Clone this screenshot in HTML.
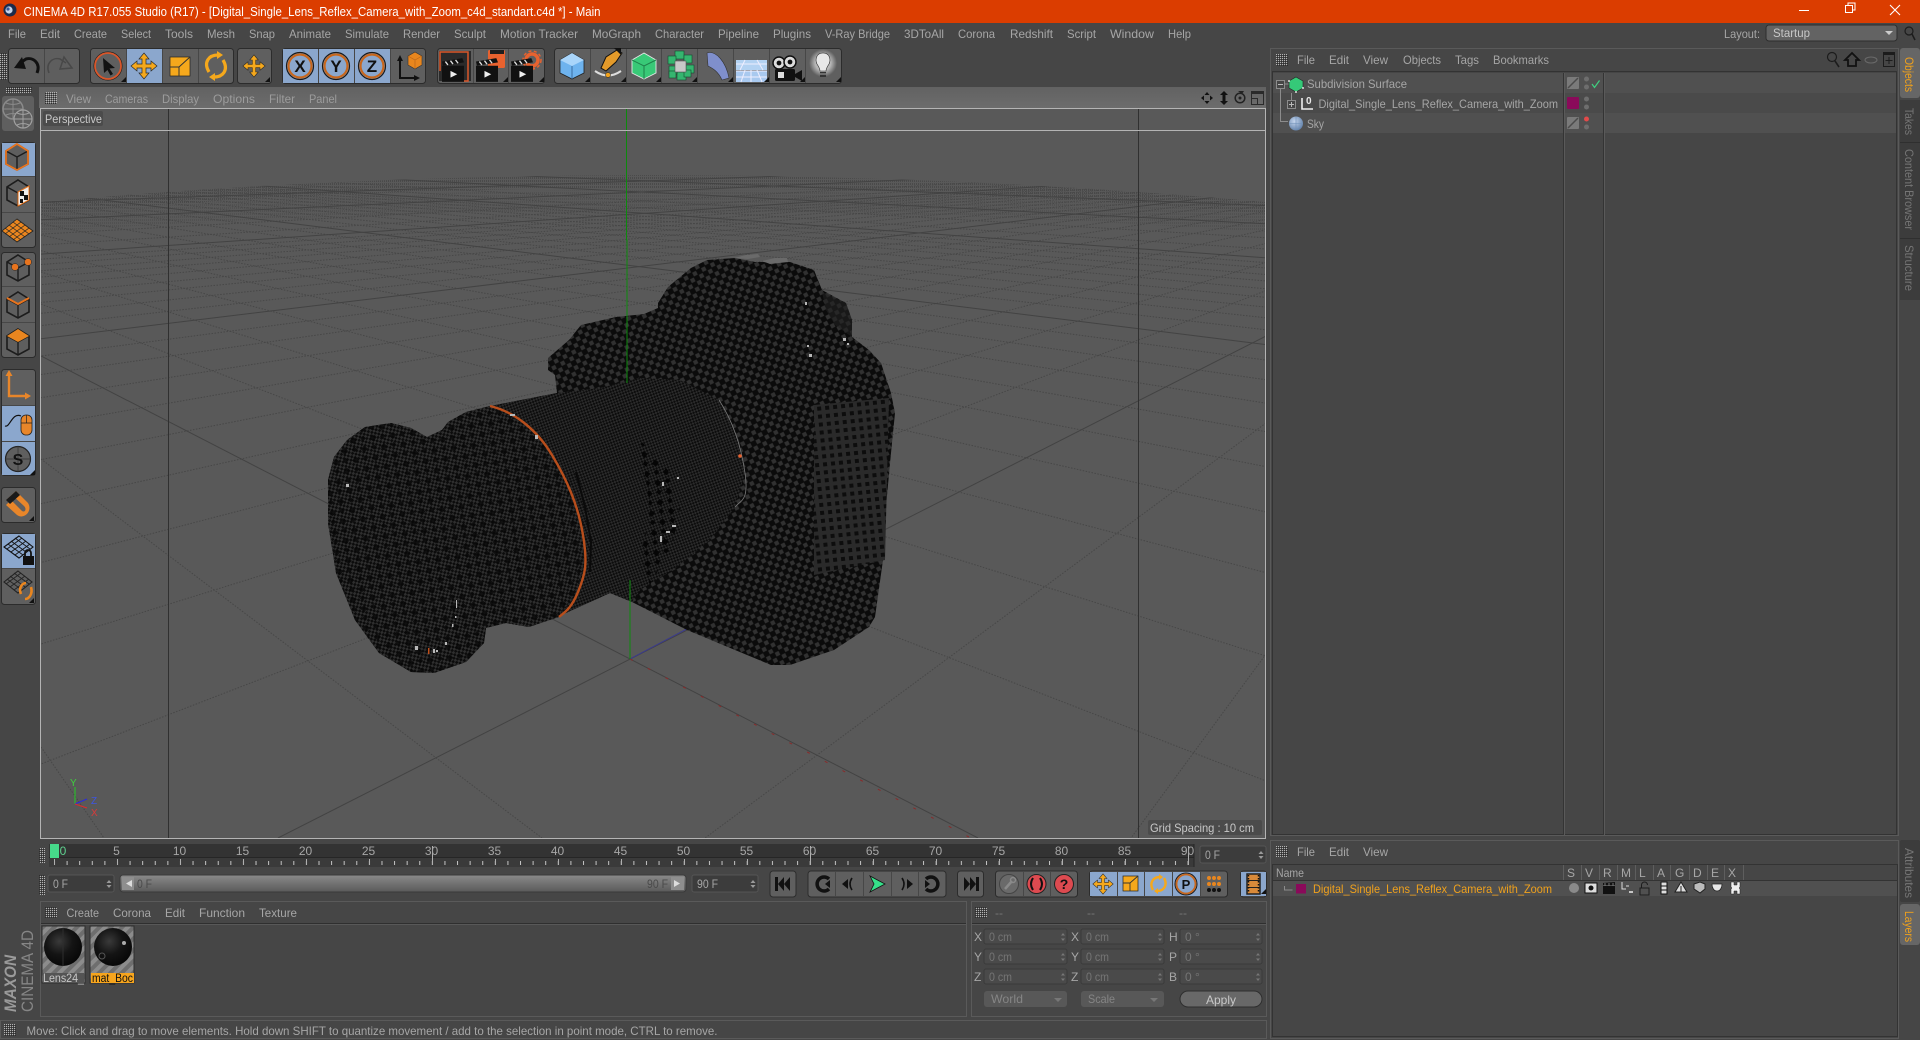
<!DOCTYPE html>
<html lang="en"><head><meta charset="utf-8"><title>CINEMA 4D</title>
<style>
html,body{margin:0;padding:0;background:#464646;overflow:hidden;width:1920px;height:1040px}
svg{display:block}
text{font-family:"Liberation Sans",sans-serif;font-size:12px;fill:#a6a6a6}
.b{font-weight:bold;fill:#111;text-anchor:middle}
.dim{fill:#757575}
.lt{fill:#c8c8c8}
.or{fill:#f0a11c}
</style></head><body>
<svg width="1920" height="1040" viewBox="0 0 1920 1040" xmlns="http://www.w3.org/2000/svg" style="overflow:hidden">
<defs>
<pattern id="g" width="2" height="2" patternUnits="userSpaceOnUse"><rect width="1" height="1" fill="#b4b4b4"/><rect x="1" y="1" width="1" height="1" fill="#2e2e2e"/></pattern>
<pattern id="pb" width="7" height="7" patternUnits="userSpaceOnUse" patternTransform="rotate(18)"><rect width="7" height="7" fill="#0b0b0b"/><path d="M3.5 .5L6.5 3.500 3.500 6.500 .5 3.500Z" fill="#313131"/></pattern>
<pattern id="pl" width="5" height="5" patternUnits="userSpaceOnUse" patternTransform="rotate(-32)"><rect width="5" height="5" fill="#0c0c0c"/><rect width="2.500" height="2.500" fill="#2e2e2e"/><rect x="2.500" y="2.500" width="2.500" height="2.500" fill="#2e2e2e"/></pattern>
<pattern id="pm" width="4" height="4" patternUnits="userSpaceOnUse" patternTransform="rotate(25)"><rect width="4" height="4" fill="#0c0c0c"/><rect width="2" height="2" fill="#2b2b2b"/><rect x="2" y="2" width="2" height="2" fill="#2b2b2b"/></pattern>
<pattern id="pk" width="14" height="14" patternUnits="userSpaceOnUse" patternTransform="rotate(38)"><rect x="1" y="1" width="5" height="5" fill="#060606"/><rect x="8" y="8" width="4" height="4" fill="#060606"/></pattern>
<pattern id="pg" width="8" height="8" patternUnits="userSpaceOnUse" patternTransform="rotate(-6)"><rect width="8" height="8" fill="#2a2a2a"/><rect x="2" y="2" width="4" height="4" fill="#0d0d0d"/></pattern>
<pattern id="hz" width="2" height="3" patternUnits="userSpaceOnUse"><rect width="1" height="2" fill="#4a4a4a"/></pattern>
<pattern id="tk" width="12.595" height="5" patternUnits="userSpaceOnUse" x="54" y="861"><rect width="1" height="4" fill="#c4c4c4"/></pattern>
<pattern id="st" width="8" height="8" patternUnits="userSpaceOnUse" patternTransform="rotate(45)"><rect width="8" height="8" fill="#6e6e6e"/><rect width="4" height="8" fill="#8c8c8c"/></pattern>
<clipPath id="vp"><rect x="41" y="109" width="1224" height="729"/></clipPath>
<clipPath id="fl"><path d="M41 202Q650 148 1266 202V838H41Z"/></clipPath>
<linearGradient id="hd" x1="0" y1="0" x2="0" y2="1"><stop offset="0" stop-color="#626262"/><stop offset="1" stop-color="#6c6c6c"/></linearGradient>
<linearGradient id="sl" x1="0" y1="0" x2="0" y2="1"><stop offset="0" stop-color="#8a8a8a"/><stop offset="1" stop-color="#5a5a5a"/></linearGradient>
<radialGradient id="sp" cx=".4" cy=".35" r=".7"><stop offset="0" stop-color="#3a3a3a"/><stop offset=".5" stop-color="#141414"/><stop offset="1" stop-color="#060606"/></radialGradient>
<radialGradient id="sk" cx=".4" cy=".35" r=".7"><stop offset="0" stop-color="#c5d6ee"/><stop offset="1" stop-color="#5f7fa8"/></radialGradient>
<radialGradient id="gl"><stop offset=".55" stop-color="#fff" stop-opacity=".55"/><stop offset="1" stop-color="#fff" stop-opacity="0"/></radialGradient>
<symbol id="mv" viewBox="-14 -14 28 28" overflow="visible"><path d="M0-13L5-7H2V-2H7V-5L13 0 7 5V2H2V7H5L0 13-5 7H-2V2H-7V5L-13 0-7-5V-2H-2V-7H-5Z" fill="#f5a81c" stroke="#2a2a2a" stroke-width=".7"/></symbol>
<symbol id="cb" viewBox="-14 -14 28 28" overflow="visible"><path d="M0-13L11-6V7L0 13-11 7V-6Z" fill="#5e5e5e" stroke="#1c1c1c" stroke-width="1.600"/><path d="M-11-6L0 0 11-6M0 0V13" fill="none" stroke="#1c1c1c" stroke-width="1.400"/></symbol>
<symbol id="tri" viewBox="0 0 5 5"><path d="M5 0V5H0Z" fill="#111"/></symbol>
<symbol id="clp" viewBox="0 0 26 28" overflow="visible"><rect x="0" y="9" width="26" height="19" fill="#111"/><path d="M0 4L24 0 26 5 1 9Z" fill="#111"/><path d="M4 4l3 4M10 3l3 4M16 2l3 4" stroke="#ddd" stroke-width="1.600"/><path d="M10 15L18 19 10 23Z" fill="#eee"/></symbol>
</defs>

<!-- title bar -->
<rect width="1920" height="23" fill="#db3d00"/>
<circle cx="10" cy="10" r="6.500" fill="#1b2a4a"/><circle cx="9" cy="10" r="3.600" fill="#c8d4ea"/><circle cx="8" cy="9" r="1.600" fill="#3b5b9b"/>
<text x="23.500" y="16" textLength="577" lengthAdjust="spacingAndGlyphs" style="font-size:13px;fill:#fff">CINEMA 4D R17.055 Studio (R17) - [Digital_Single_Lens_Reflex_Camera_with_Zoom_c4d_standart.c4d *] - Main</text>
<rect x="1799" y="10" width="10" height="1" fill="#fff"/>
<path d="M1845.500 12.500h7v-7h-7zM1848 5.500v-2.500h7v7h-2.500" fill="none" stroke="#fff"/>
<path d="M1890 5l10 10M1900 5l-10 10" stroke="#fff" stroke-width="1.100"/>

<!-- menu -->
<g>
<text x="8" y="38" textLength="18" lengthAdjust="spacingAndGlyphs">File</text>
<text x="40" y="38" textLength="20" lengthAdjust="spacingAndGlyphs">Edit</text>
<text x="74" y="38" textLength="33" lengthAdjust="spacingAndGlyphs">Create</text>
<text x="121" y="38" textLength="30" lengthAdjust="spacingAndGlyphs">Select</text>
<text x="165" y="38" textLength="28" lengthAdjust="spacingAndGlyphs">Tools</text>
<text x="207" y="38" textLength="28" lengthAdjust="spacingAndGlyphs">Mesh</text>
<text x="249" y="38" textLength="26" lengthAdjust="spacingAndGlyphs">Snap</text>
<text x="289" y="38" textLength="42" lengthAdjust="spacingAndGlyphs">Animate</text>
<text x="345" y="38" textLength="44" lengthAdjust="spacingAndGlyphs">Simulate</text>
<text x="403" y="38" textLength="37" lengthAdjust="spacingAndGlyphs">Render</text>
<text x="454" y="38" textLength="32" lengthAdjust="spacingAndGlyphs">Sculpt</text>
<text x="500" y="38" textLength="78" lengthAdjust="spacingAndGlyphs">Motion Tracker</text>
<text x="592" y="38" textLength="49" lengthAdjust="spacingAndGlyphs">MoGraph</text>
<text x="655" y="38" textLength="49" lengthAdjust="spacingAndGlyphs">Character</text>
<text x="718" y="38" textLength="41" lengthAdjust="spacingAndGlyphs">Pipeline</text>
<text x="773" y="38" textLength="38" lengthAdjust="spacingAndGlyphs">Plugins</text>
<text x="825" y="38" textLength="65" lengthAdjust="spacingAndGlyphs">V-Ray Bridge</text>
<text x="904" y="38" textLength="40" lengthAdjust="spacingAndGlyphs">3DToAll</text>
<text x="958" y="38" textLength="37" lengthAdjust="spacingAndGlyphs">Corona</text>
<text x="1010" y="38" textLength="43" lengthAdjust="spacingAndGlyphs">Redshift</text>
<text x="1067" y="38" textLength="29" lengthAdjust="spacingAndGlyphs">Script</text>
<text x="1110" y="38" textLength="44" lengthAdjust="spacingAndGlyphs">Window</text>
<text x="1168" y="38" textLength="23" lengthAdjust="spacingAndGlyphs">Help</text>
<text x="1724" y="38" textLength="36" lengthAdjust="spacingAndGlyphs">Layout:</text>
<rect x="1766" y="25" width="131" height="16" rx="3" fill="#636363" stroke="#2e2e2e"/>
<text x="1773" y="37" textLength="37" lengthAdjust="spacingAndGlyphs" class="lt">Startup</text>
<path d="M1885 31h8l-4 4Z" fill="#ccc"/>
<circle cx="1909" cy="31" r="4" fill="none" stroke="#1c1c1c" stroke-width="1.200"/><path d="M1912 34l3 6" stroke="#1c1c1c" stroke-width="1.500"/>
</g>

<!-- toolbar -->
<rect x="0" y="53" width="7" height="27" fill="url(#g)"/>
<g stroke="#2c2c2c">
<rect x="8.500" y="48.500" width="71" height="35" rx="3" fill="#5e5e5e"/>
<rect x="90.500" y="48.500" width="143" height="35" rx="3" fill="#5f5f5f"/>
<rect x="237.500" y="48.500" width="34" height="35" rx="3" fill="#5f5f5f"/>
<rect x="282.500" y="48.500" width="143" height="35" rx="3" fill="#5f5f5f"/>
<rect x="437.500" y="48.500" width="107" height="35" rx="3" fill="#5f5f5f"/>
<rect x="554.500" y="48.500" width="287" height="35" rx="3" fill="#5f5f5f"/>
</g>
<rect x="126" y="49" width="36" height="34" fill="#8ba7cd"/>
<rect x="283" y="49" width="107" height="34" fill="#8ba7cd"/>
<path d="M44.500 49v34M126.500 49v34M162.500 49v34M198.500 49v34M318.500 49v34M354.500 49v34M390.500 49v34M473.500 49v34M508.500 49v34M590.500 49v34M626.500 49v34M661.500 49v34M697.500 49v34M733.500 49v34M769.500 49v34M805.500 49v34" stroke="#474747"/>
<!-- undo/redo -->
<path d="M37 73C41 63 33 57 26 59L20 63" fill="none" stroke="#111" stroke-width="3"/><path d="M14 68L22 57 26 69Z" fill="#111"/>
<path d="M49 73C45 63 53 57 60 59L66 63M72 68L64 57 60 69Z" fill="none" stroke="#484848" stroke-width="1.500"/>
<!-- select -->
<circle cx="108" cy="66" r="14" fill="#5f5f5f" stroke="#1d1d1d" stroke-width="1"/><circle cx="108" cy="66" r="13" fill="none" stroke="#d9572b" stroke-width="1.800"/>
<path d="M103 58L115 68 109.500 68.500 113 74 110.500 75.500 107.500 70 104 73Z" fill="#111"/>
<use href="#tri" x="121" y="77" width="5" height="5"/>
<use href="#mv" x="130" y="52" width="28" height="28"/>
<rect x="170" y="57" width="20" height="19" fill="#f5a81c" stroke="#222" stroke-width=".7"/><path d="M179 76V67H170M179 67L190 57" fill="none" stroke="#333" stroke-width="1"/>
<path d="M209 72C203 62 209 55 218 55M223 60C229 70 223 77 214 77" fill="none" stroke="#f5a81c" stroke-width="3.200"/><path d="M217 51l6 4-6 4ZM215 73l-6 4 6 4Z" fill="#f5a81c"/>
<use href="#mv" x="242" y="54" width="24" height="24"/>
<use href="#tri" x="265" y="77" width="5" height="5"/>
<!-- XYZ -->
<g fill="none"><circle cx="300" cy="66" r="13.500" stroke="#1b1b1b" stroke-width="1.200"/><circle cx="300" cy="66" r="11.500" stroke="#c8671d" stroke-width="2.200"/>
<circle cx="336" cy="66" r="13.500" stroke="#1b1b1b" stroke-width="1.200"/><circle cx="336" cy="66" r="11.500" stroke="#c8671d" stroke-width="2.200"/>
<circle cx="372" cy="66" r="13.500" stroke="#1b1b1b" stroke-width="1.200"/><circle cx="372" cy="66" r="11.500" stroke="#c8671d" stroke-width="2.200"/></g>
<text x="300" y="72" class="b" style="font-size:17px">X</text><text x="336" y="72" class="b" style="font-size:17px">Y</text><text x="372" y="72" class="b" style="font-size:17px">Z</text>
<path d="M400 60V78H416" fill="none" stroke="#111" stroke-width="2"/><path d="M400 55l-3 6h6ZM420 78l-6-3v6Z" fill="#111"/>
<path d="M408 56L415 52 422 56V65L415 69 408 65Z" fill="#e8861e" stroke="#333" stroke-width=".6"/><path d="M408 56l7 4 7-4M415 60v9" fill="none" stroke="#b9661a" stroke-width=".7"/>
<!-- clappers -->
<rect x="439" y="51" width="32" height="30" fill="#2b2b2b"/><path d="M440 71V52H468V81H460" fill="none" stroke="#d9572b" stroke-width="1.500"/>
<use href="#clp" x="442" y="58" width="22" height="24"/>
<rect x="488" y="50" width="17" height="18" rx="1.500" fill="#e8622f"/><rect x="490" y="50" width="14" height="4" fill="#1e1e1e"/>
<use href="#clp" x="476" y="58" width="22" height="24"/><use href="#tri" x="503" y="77" width="5" height="5"/>
<circle cx="532" cy="60" r="6" fill="none" stroke="#e8622f" stroke-width="3.500"/><circle cx="532" cy="60" r="9" fill="none" stroke="#e8622f" stroke-width="1.500" stroke-dasharray="3 2.500"/>
<use href="#clp" x="511" y="58" width="22" height="24"/><use href="#tri" x="539" y="77" width="5" height="5"/>
<!-- objects -->
<path d="M572 53L584 60V73L572 79 560 73V60Z" fill="#6eb3ee" stroke="#222" stroke-width=".8"/><path d="M560 60L572 66 584 60 572 53Z" fill="#a9d5fa"/><path d="M572 66V79" stroke="#3a6ea0"/><use href="#tri" x="585" y="77" width="5" height="5"/>
<path d="M595 71Q608 80 621 71" fill="none" stroke="#ddd" stroke-width="2"/><circle cx="608" cy="75" r="2.500" fill="#f0a11c" stroke="#222" stroke-width=".5"/>
<path d="M601 68L606 57 617 50 622 53 616 62 606 71Z" fill="#e39a2a" stroke="#111"/><path d="M614 48h7v7Z" fill="#111"/><use href="#tri" x="621" y="77" width="5" height="5"/>
<path d="M644 53L656 60V73L644 79 632 73V60Z" fill="#38c977" stroke="#e6e6e6" stroke-width=".9"/><path d="M632 60L644 66 656 60" fill="none" stroke="#1e7f4a"/><path d="M644 66V79" stroke="#1e7f4a"/><use href="#tri" x="656" y="77" width="5" height="5"/>
<g fill="#35b56f" stroke="#14492d" stroke-width=".6"><rect x="675" y="51" width="9" height="8"/><rect x="684" y="55" width="8" height="8"/><rect x="686" y="65" width="8" height="8"/><rect x="677" y="72" width="9" height="8"/><rect x="669" y="66" width="8" height="8"/><rect x="668" y="56" width="8" height="8"/><rect x="684" y="70" width="7" height="7"/><rect x="669" y="71" width="7" height="7"/></g><rect x="675" y="61" width="11" height="11" fill="#c8c8c8" stroke="#555" stroke-width=".6"/><use href="#tri" x="692" y="77" width="5" height="5"/>
<path d="M707 53C716 50 726 62 729 78L722 80C718 71 712 68 708 66Z" fill="#7f8fcc" stroke="#333" stroke-width=".6"/><use href="#tri" x="728" y="77" width="5" height="5"/>
<path d="M736 71H767V82H736Z" fill="#a9c9ef"/><path d="M736 70H767V60H736Z" fill="#b3d2f2"/><path d="M736 64H767M736 71H767M736 77H767M745 70L741 82M751 70V82M757 70L762 82M745 60L740 70M757 60L763 70" stroke="#eef" stroke-width="1"/><use href="#tri" x="764" y="77" width="5" height="5"/>
<circle cx="779" cy="63" r="6" fill="#ddd" stroke="#111" stroke-width="1.500"/><circle cx="779" cy="63" r="2.400" fill="#111"/><circle cx="790" cy="62" r="6" fill="#ddd" stroke="#111" stroke-width="1.500"/><circle cx="790" cy="62" r="2.400" fill="#111"/><rect x="775" y="69" width="20" height="12" rx="1.500" fill="#111"/><rect x="778" y="72" width="6" height="6" fill="#ddd"/><path d="M795 74L802 70V81L795 77Z" fill="#111"/><use href="#tri" x="800" y="77" width="5" height="5"/>
<circle cx="823" cy="63" r="14" fill="url(#gl)"/><path d="M823 53C816 53 815 60 817 64C819 67 820 69 820 71H826C826 69 827 67 829 64C831 60 830 53 823 53Z" fill="#e8e8e8" stroke="#2a2a2a" stroke-width=".6"/><path d="M820 72H826V77H820Z" fill="#333"/><path d="M820 74H826" stroke="#aaa"/><use href="#tri" x="836" y="77" width="5" height="5"/>

<!-- left tool bar -->
<rect x="6" y="87" width="26" height="6" fill="url(#g)"/>
<rect x="2" y="96" width="32" height="35" rx="3" fill="#5f5f5f"/>
<circle cx="13" cy="109" r="10" fill="none" stroke="#8a8a8a" stroke-width="1.500"/><path d="M3 109H23M13 99V119M6 103Q13 106 20 103M6 115Q13 112 20 115" fill="none" stroke="#8a8a8a"/><circle cx="23" cy="119" r="9" fill="#5f5f5f" stroke="#a0a0a0" stroke-width="1.200"/><path d="M14 119H32M23 110V128M17 113Q23 116 29 113M17 125Q23 122 29 125" fill="none" stroke="#a0a0a0"/>
<g stroke="#2c2c2c" fill="#5f5f5f"><rect x="1.500" y="142.500" width="34" height="105" rx="3"/><rect x="1.500" y="252.500" width="34" height="105" rx="3"/><rect x="1.500" y="369.500" width="34" height="106" rx="3"/><rect x="1.500" y="487.500" width="34" height="35" rx="3"/><rect x="1.500" y="533.500" width="34" height="71" rx="3"/></g>
<rect x="2" y="143" width="33" height="33" fill="#8ba7cd"/><rect x="2" y="405" width="33" height="70" fill="#8ba7cd"/><rect x="2" y="534" width="33" height="34" fill="#8ba7cd"/>
<path d="M2 176.500h33M2 212.500h33M2 286.500h33M2 322.500h33M2 405.500h33M2 441.500h33M2 568.500h33" stroke="#474747"/>
<!-- left icons -->
<use href="#cb" x="3" y="143" width="28" height="28"/><path d="M17 144L28 151V164L17 170 6 164V151Z" fill="none" stroke="#e8741e" stroke-width="1.800"/>
<use href="#cb" x="4" y="179" width="28" height="28"/><path d="M18 192L29 186V200L18 206Z" fill="#eee" stroke="#e8741e"/><path d="M20 191h4v5h-4zM24 195h4v5h-4zM20 199h3v4h-3z" fill="#111"/>
<path d="M17 219L33 231 17 242 2 231Z" fill="#ea861f" stroke="#222" stroke-width=".8"/><path d="M9 225L25 237M13 222L29 234M5 228L21 240M25 225L9 237M21 222L5 234M29 228L13 240" stroke="#222" stroke-width=".7"/>
<use href="#cb" x="4" y="254" width="28" height="28"/><circle cx="15" cy="267" r="3.500" fill="#e8741e" stroke="#222" stroke-width=".5"/><circle cx="28" cy="262" r="3.500" fill="#e8741e" stroke="#222" stroke-width=".5"/>
<use href="#cb" x="4" y="291" width="28" height="28"/><path d="M7 298L18 304 29 298" fill="none" stroke="#e8741e" stroke-width="2"/>
<use href="#cb" x="4" y="328" width="28" height="28"/><path d="M18 329L29 336 18 342 7 336Z" fill="#ea861f"/>
<path d="M9 374V396H29" fill="none" stroke="#e8862a" stroke-width="2.400"/><path d="M9 370l-3.500 6h7ZM31 396l-6-3.500v7Z" fill="#e8862a"/>
<rect x="21" y="415" width="11" height="20" rx="5" fill="#e8862a" stroke="#222" stroke-width=".8"/><path d="M21 423H32M26.500 415V423" stroke="#222" stroke-width=".7"/><path d="M5 426C10 428 12 412 21 416" fill="none" stroke="#111" stroke-width="1.200"/>
<circle cx="18" cy="459" r="12.500" fill="#5f5f5f" stroke="#222" stroke-width="1.200"/><path d="M5 459H31M18 446V472" stroke="#333" stroke-width=".7"/><text x="18" y="465" class="b" style="font-size:16px">S</text><use href="#tri" x="30" y="470" width="5" height="5"/>
<path d="M6 500L16 491 28 503C33 511 24 520 17 515L6 505 11 500 22 511C25 513 27 509 24 506L12 495Z" fill="#e8862a"/><path d="M6 500L16 491 20 495 10 504Z" fill="#1a1a1a"/><use href="#tri" x="29" y="516" width="5" height="5"/>
<path d="M19 536L33 547 19 558 4 547Z" fill="none" stroke="#111" stroke-width="1.100"/><path d="M11 541L26 552M15 538L30 549M8 544L23 555M26 541L11 552M22 538L7 549M30 544L15 555" stroke="#111" stroke-width=".8"/><rect x="23" y="556" width="11" height="9" fill="#111"/><path d="M25 556v-3a3 3 0 016 0v3" fill="none" stroke="#111" stroke-width="1.800"/>
<path d="M18 571L32 582 18 593 4 582Z" fill="none" stroke="#222" stroke-width="1.100"/><path d="M10 576L25 587M14 573L29 584M7 579L22 590M25 576L10 587M21 573L6 584M29 579L14 590" stroke="#222" stroke-width=".8"/><path d="M21 594C18 587 23 583 26 583M31 587C33 594 29 599 25 599" fill="none" stroke="#ea861f" stroke-width="2.600"/><use href="#tri" x="29" y="598" width="5" height="5"/>

<!-- viewport -->
<rect x="39" y="87" width="1227" height="21" fill="url(#hd)"/>
<rect x="45" y="92" width="12" height="12" fill="url(#g)"/>
<text x="66" y="103" textLength="25" lengthAdjust="spacingAndGlyphs" style="fill:#9c9c9c">View</text>
<text x="105" y="103" textLength="43" lengthAdjust="spacingAndGlyphs" style="fill:#9c9c9c">Cameras</text>
<text x="162" y="103" textLength="37" lengthAdjust="spacingAndGlyphs" style="fill:#9c9c9c">Display</text>
<text x="213" y="103" textLength="42" lengthAdjust="spacingAndGlyphs" style="fill:#9c9c9c">Options</text>
<text x="269" y="103" textLength="26" lengthAdjust="spacingAndGlyphs" style="fill:#9c9c9c">Filter</text>
<text x="309" y="103" textLength="28" lengthAdjust="spacingAndGlyphs" style="fill:#9c9c9c">Panel</text>
<path d="M1207 92l2.500 3h-5ZM1207 104l2.500-3h-5ZM1201 98l3-2.500v5ZM1213 98l-3-2.500v5Z" fill="#111"/>
<path d="M1224 91l4 4h-2.500v6h2.500l-4 4-4-4h2.500v-6h-2.500Z" fill="#111"/>
<circle cx="1240" cy="98" r="4.800" fill="none" stroke="#222" stroke-width="1.500"/><circle cx="1240" cy="98" r="1.500" fill="#222"/><path d="M1238 91h6l-2 3Z" fill="#222"/>
<rect x="1251.500" y="92.500" width="12" height="12" fill="none" stroke="#2a2a2a"/><rect x="1251" y="91" width="13" height="3" fill="#2a2a2a"/><path d="M1251.500 98.500h6v6" fill="none" stroke="#2a2a2a"/>

<rect x="40" y="108" width="1226" height="731" fill="#595959"/>
<g clip-path="url(#vp)">
<g clip-path="url(#fl)">
<path d="M41 202Q650 148 1266 202V214Q650 162 41 214Z" fill="url(#hz)"/>
<path d="M41 214Q650 166 1266 214V232Q650 190 41 232Z" fill="url(#hz)" opacity=".55"/>
<g fill="none" stroke="#474747" stroke-width="1" stroke-dasharray="1.500 1.500">
<path d="M41 747L104 838M41 459L542 838M41 304L1266 781M41 272L1266 656M41 250.700L1266 572.700M41 235L1266 512M41 223.600L1266 466.700M41 214.600L1266 431.700M41 207.300L1266 403.200M41 201.300L1266 379.800M41 196.300L1266 360.100M41 188.500L1266 329.800M41 185.500L1266 317.800M41 182.700L1266 307.100M41 180.200L1266 297.400M41 178L1266 288.800M41 176L1266 281M41 174.400L1266 274.500M41 172.800L1266 268M41 171.400L1266 262.600M41 167.900L1266 249M41 165L1266 237.800"/>
<path d="M1266 654L1131 838M1266 423L705 838M1266 290.600L41 764M1266 262.500L41 644M1266 243.400L41 562.500M1266 229.700L41 503.700M1266 219.300L41 459.600M1266 211.400L41 425.500M1266 204.900L41 397.700M1266 199.400L41 374.500M1266 195.100L41 356M1266 188L41 325.600M1266 185.100L41 313.300M1266 182.600L41 302.400M1266 180.500L41 293.400M1266 178.400L41 284.600M1266 176.700L41 277.100M1266 175.200L41 270.700M1266 173.700L41 264.500M1266 172.500L41 259.200M1266 169.200L41 245M1266 166.600L41 234.100"/>
</g>
<g fill="none" stroke="#434343" stroke-width="1">
<path d="M41 356L978 838M41 192.300L1266 344.600M41 170.100L1266 257.800M41 161.400L1266 223.800M41 156.800L1266 205.500"/>
<path d="M1266 336L278 838M1266 191.100L41 338.700M1266 171.300L41 254.100M1266 163.200L41 219.700M1266 159.100L41 202.100"/>
</g>
</g>
<path d="M630 659L700 622" stroke="#3a3a8e" stroke-width="1"/>
<path d="M630 659L969 837" stroke="#8a2a2a" stroke-width="1" stroke-dasharray="3 17"/>
<path d="M168.500 108V838M1138.500 108V838" stroke="#303030" stroke-width="1"/>
</g>

<!-- camera -->
<path d="M658 303L668 287 691 268 707 260 735 258 755 262 790 262 814 270 822 290 846 303 852 320 852 337 869 350 881 363 891 393 895 413 891 453 885 517 883 560 875 617 869 627 834 650 790 665 771 665 735 650 687 630 632 602 610 593 557 617 529 627 506 623 486 628 484 643 466 662 434 673 411 672 379 653 355 620 336 573 328 523 328 480 334 457 347 440 365 427 391 423 411 428 427 437 442 430 448 422 466 412 490 406 521 400 557 393 555 375 548 370 548 358 569 340 581 325 616 317 644 314 658 308Z" fill="url(#pb)"/>
<path d="M814 405L889 398 885 560 814 575Z" fill="url(#pg)"/>
<path d="M822 292L846 303 852 320 852 337 835 325 826 310Z" fill="#222" opacity=".6"/>
<path id="ln" d="M347 440L365 427 391 423 411 428 427 437 442 430 448 422 466 412 490 406 537 430 569 480 583 523 584 563 577 593 559 617 529 627 506 623 486 628 484 643 466 662 434 673 411 672 379 653 355 620 336 573 328 523 328 480 334 457Z" fill="url(#pl)"/>
<path d="M347 440L365 427 391 423 411 428 427 437 442 430 448 422 466 412 490 406 537 430 569 480 583 523 584 563 577 593 559 617 529 627 506 623 486 628 484 643 466 662 434 673 411 672 379 653 355 620 336 573 328 523 328 480 334 457Z" fill="url(#pk)" opacity=".75"/>
<path d="M490 406L521 400 557 393 600 388 640 378 680 380 719 400 739 440 745 473 735 507 710 540 680 565 640 590 632 602 610 593 557 617 577 593 584 563 583 523 569 480 537 430Z" fill="url(#pm)"/>
<path d="M640 440L668 470 680 510 672 545 650 585 640 560 650 510Z" fill="url(#pk)"/>
<path d="M490 406C515 412 537 430 552 455S578 505 583 535 585 575 578 592 565 612 559 617" fill="none" stroke="#b84e1c" stroke-width="2.400"/>
<path d="M571 470L580 505 586 540 585 570" fill="none" stroke="#0a0a0a" stroke-width="2" transform="translate(5,2)"/>
<path d="M719 400C732 420 741 445 745 473S741 500 735 507" fill="none" stroke="#7a7a7a" stroke-width=".8"/>
<circle cx="740" cy="456" r="1.800" fill="#e8622f"/>
<path d="M734 258L746 255 758 254 760 257 748 259ZM762 261L775 258 787 258 788 262 770 264Z" fill="#6a6a6a"/>
<g fill="#b8b8b8">
<rect x="346" y="484" width="3" height="3"/><rect x="415" y="646" width="3" height="4"/><rect x="433" y="649" width="2" height="4"/><rect x="436" y="650" width="2" height="2"/><rect x="445" y="642" width="2" height="3"/><rect x="452" y="624" width="1.500" height="3"/><rect x="455" y="616" width="1.500" height="2"/><rect x="456" y="600" width="1" height="8"/>
<rect x="510" y="414" width="5" height="2"/><rect x="535" y="435" width="3" height="4"/><rect x="662" y="482" width="2" height="4"/><rect x="677" y="477" width="2" height="2"/><rect x="660" y="536" width="2" height="6"/><rect x="666" y="531" width="4" height="2"/><rect x="672" y="525" width="4" height="2"/><rect x="805" y="302" width="2" height="3"/><rect x="843" y="338" width="3" height="3"/><rect x="847" y="343" width="2" height="2"/><rect x="807" y="345" width="2" height="2"/><rect x="809" y="354" width="3" height="3"/>
</g>
<rect x="428" y="648" width="1.500" height="6" fill="#c0501c"/>
<path d="M626.500 108V240L627 240V383" stroke="#0d8a0d" stroke-width="1" fill="none"/>
<path d="M630 580V659" stroke="#0d8a0d" stroke-width="1"/>

<!-- viewport frame -->
<path d="M40 108.500H1266M40 130.500H1266M40.500 108V839M1265.500 108V839M40 838.500H1266" fill="none" stroke="#b4b4b4" stroke-width="1"/>
<rect x="43" y="111" width="60" height="15" rx="2" fill="#4b4b4b"/>
<text x="45" y="123" textLength="57" lengthAdjust="spacingAndGlyphs" class="lt">Perspective</text>
<rect x="1148" y="820" width="114" height="15" rx="2" fill="#4b4b4b"/>
<text x="1150" y="832" textLength="104" lengthAdjust="spacingAndGlyphs" class="lt">Grid Spacing : 10 cm</text>
<path d="M75 804V787" stroke="#22cc22" stroke-width="1"/><path d="M75 804L87 799" stroke="#2a2ae0" stroke-width="1"/><path d="M75 804L87 808" stroke="#e02a2a" stroke-width="1"/>
<text x="70" y="786" style="font-size:10px;fill:#3fcf3f">Y</text><text x="91" y="804" style="font-size:10px;fill:#3f55e0">Z</text><text x="91" y="816" style="font-size:10px;fill:#d83a3a">X</text>

<!-- timeline -->
<rect x="39" y="848" width="6" height="15" fill="url(#g)"/><rect x="39" y="875" width="6" height="20" fill="url(#g)"/>
<rect x="49" y="844" width="1145" height="14" fill="#333"/><rect x="49" y="858" width="1145" height="9" fill="#3a3a3a"/>
<path d="M49 857.500H1194M1194 844V867" stroke="#262626"/>
<rect x="54" y="861" width="1135" height="4" fill="url(#tk)"/>
<path d="M54.500 859v6M117.500 859v6M180.500 859v6M243.500 859v6M306.500 859v6M369.500 859v6M432.500 846v19M495.500 859v6M558.500 859v6M621.500 859v6M684.500 859v6M747.500 859v6M810.500 846v19M873.500 859v6M936.500 859v6M999.500 859v6M1062.500 859v6M1125.500 859v6M1188.500 846v19" stroke="#b0b0b0"/>
<rect x="50" y="844" width="9" height="14" fill="#46d98a"/>
<g text-anchor="middle">
<text x="63" y="855" style="fill:#5fd08f">0</text><text x="116.500" y="855">5</text><text x="179.500" y="855">10</text><text x="242.500" y="855">15</text><text x="305.500" y="855">20</text><text x="368.500" y="855">25</text><text x="431.500" y="855">30</text><text x="494.500" y="855">35</text><text x="557.500" y="855">40</text><text x="620.500" y="855">45</text><text x="683.500" y="855">50</text><text x="746.500" y="855">55</text><text x="809.500" y="855">60</text><text x="872.500" y="855">65</text><text x="935.500" y="855">70</text><text x="998.500" y="855">75</text><text x="1061.500" y="855">80</text><text x="1124.500" y="855">85</text><text x="1187.500" y="855">90</text>
</g>
<rect x="1200" y="846" width="66" height="17" rx="2" fill="#3c3c3c" stroke="#555"/>
<text x="1205" y="859" textLength="15" lengthAdjust="spacingAndGlyphs">0 F</text><path d="M1261 851l2.500 3h-5ZM1261 859l2.500-3h-5Z" fill="#999"/>
<rect x="48" y="875" width="66" height="17" rx="2" fill="#3c3c3c" stroke="#555"/>
<text x="53" y="888" textLength="15" lengthAdjust="spacingAndGlyphs">0 F</text><path d="M109 880l2.500 3h-5ZM109 888l2.500-3h-5Z" fill="#999"/>
<rect x="120" y="875" width="566" height="17" rx="3" fill="url(#sl)" stroke="#3a3a3a"/>
<rect x="122" y="877" width="12" height="13" fill="#8e8e8e"/><path d="M132 880v7l-6-3.500Z" fill="#ddd"/>
<text x="137" y="888" textLength="15" lengthAdjust="spacingAndGlyphs" style="fill:#4a4a4a">0 F</text>
<text x="647" y="888" textLength="21" lengthAdjust="spacingAndGlyphs" style="fill:#4a4a4a">90 F</text>
<rect x="671" y="877" width="13" height="13" fill="#8e8e8e"/><path d="M674 880v7l6-3.500Z" fill="#ddd"/>
<rect x="692" y="875" width="66" height="17" rx="2" fill="#3c3c3c" stroke="#555"/>
<text x="697" y="888" textLength="21" lengthAdjust="spacingAndGlyphs">90 F</text><path d="M753 880l2.500 3h-5ZM753 888l2.500-3h-5Z" fill="#999"/>
<!-- transport -->
<g stroke="#2c2c2c" fill="#5f5f5f"><rect x="770" y="871" width="26" height="26" rx="3"/><rect x="808" y="871" width="138" height="26" rx="3"/><rect x="957.500" y="871" width="26" height="26" rx="3"/><rect x="995.500" y="871" width="82" height="26" rx="3"/><rect x="1089.500" y="871" width="138" height="26" rx="3"/><rect x="1240.500" y="871" width="26" height="26" rx="3"/></g>
<rect x="1090" y="872" width="110" height="24" fill="#8ba7cd"/><rect x="1241" y="872" width="25" height="24" fill="#8ba7cd"/>
<path d="M835.500 872v24M863.500 872v24M891.500 872v24M918.500 872v24M1023.500 872v24M1050.500 872v24M1117.500 872v24M1144.500 872v24M1172.500 872v24M1200.500 872v24" stroke="#474747"/>
<path d="M775 877h3v14h-3zM778 884l6-7v14ZM784 884l6-7v14Z" fill="#111"/>
<path d="M829 879A7 7 0 1 0 829 889" fill="none" stroke="#111" stroke-width="3.500"/><path d="M825 884l5-4v8Z" fill="#111"/>
<path d="M842 884l6-5v10Z" fill="#111"/><path d="M852 878Q848 884 852 890" fill="none" stroke="#111" stroke-width="1.600"/>
<path d="M870 876L885 884 870 892 874 884Z" fill="#36e08a" stroke="#111" stroke-width=".8"/>
<path d="M902 878Q906 884 902 890" fill="none" stroke="#111" stroke-width="1.600"/><path d="M907 879l6 5-6 5Z" fill="#111"/>
<path d="M926 879A7 7 0 1 1 926 889" fill="none" stroke="#111" stroke-width="3.500"/><path d="M930 884l-5-4v8Z" fill="#111"/>
<path d="M964 877l6 7-6 7ZM970 877l6 7-6 7ZM976 877h3v14h-3z" fill="#111"/>
<circle cx="1009" cy="884" r="9.500" fill="#6a6a6a" stroke="#444"/><path d="M1005 889L1012 881" stroke="#8a8a8a" stroke-width="2.500"/><circle cx="1013" cy="880" r="2.500" fill="none" stroke="#8a8a8a" stroke-width="1.400"/>
<circle cx="1036.500" cy="884" r="9.500" fill="#dd4a50" stroke="#222"/><path d="M1033 878Q1029 884 1033 890M1040 878Q1044 884 1040 890" fill="none" stroke="#111" stroke-width="2"/>
<circle cx="1064" cy="884" r="9.500" fill="#dd4a50" stroke="#222"/><text x="1064" y="889" class="b" style="font-size:14px">?</text>
<use href="#mv" x="1092" y="873" width="22" height="22"/>
<rect x="1123" y="876" width="15" height="15" fill="#f5a81c" stroke="#222" stroke-width=".7"/><path d="M1130 891v-8h-7M1130 883l8-7" fill="none" stroke="#333" stroke-width=".9"/>
<path d="M1153 890C1149 883 1153 877 1160 877M1164 878C1168 885 1164 891 1157 891" fill="none" stroke="#f5a81c" stroke-width="2.400"/><path d="M1159 874l4 3-4 3ZM1158 888l-4 3 4 3Z" fill="#f5a81c"/>
<circle cx="1186" cy="884" r="11" fill="none" stroke="#1b1b1b" stroke-width="1"/><circle cx="1186" cy="884" r="9.500" fill="none" stroke="#c8671d" stroke-width="1.800"/><text x="1186" y="889" class="b" style="font-size:13px">P</text>
<g fill="#e8861e"><circle cx="1209" cy="878" r="2"/><circle cx="1214" cy="878" r="2"/><circle cx="1219" cy="878" r="2"/><circle cx="1209" cy="884" r="2"/><circle cx="1214" cy="884" r="2"/><circle cx="1219" cy="884" r="2"/></g><g fill="#111"><circle cx="1209" cy="890" r="2"/><circle cx="1214" cy="890" r="2"/><circle cx="1219" cy="890" r="2"/></g>
<rect x="1247" y="874" width="13" height="20" fill="#d98a3a" stroke="#222" stroke-width="1.500"/><path d="M1247 880.500h13M1247 887.500h13" stroke="#222"/><path d="M1248.500 875v18M1258.500 875v18" stroke="#111" stroke-dasharray="1.500 1.500" stroke-width="1.500"/><use href="#tri" x="1261" y="889" width="5" height="5"/>

<!-- material panel -->
<rect x="40.500" y="901.500" width="926" height="115" fill="#464646" stroke="#5a5a5a"/>
<path d="M41 923.500H966" stroke="#2f2f2f"/><path d="M41 924.500H966" stroke="#585858"/>
<rect x="45" y="907" width="12" height="11" fill="url(#g)"/>
<text x="66.500" y="917" textLength="32.500" lengthAdjust="spacingAndGlyphs">Create</text>
<text x="113" y="917" textLength="38" lengthAdjust="spacingAndGlyphs">Corona</text>
<text x="165" y="917" textLength="20" lengthAdjust="spacingAndGlyphs">Edit</text>
<text x="199" y="917" textLength="46" lengthAdjust="spacingAndGlyphs">Function</text>
<text x="259" y="917" textLength="38" lengthAdjust="spacingAndGlyphs">Texture</text>
<rect x="42" y="926" width="43" height="57" fill="url(#st)" stroke="#2e2e2e"/><ellipse cx="63" cy="947" rx="19" ry="19" fill="url(#sp)"/><path d="M63 928V966" stroke="#2e2e2e"/>
<rect x="43" y="973" width="41" height="10" fill="#545454"/>
<text x="43" y="982" textLength="41" lengthAdjust="spacingAndGlyphs" class="lt" style="font-size:11.500px">Lens24_</text>
<rect x="90" y="926" width="44" height="57" fill="url(#st)" stroke="#2e2e2e"/><ellipse cx="113" cy="947" rx="19" ry="19" fill="url(#sp)"/><circle cx="124" cy="943" r="2" fill="#aaa"/><circle cx="102" cy="956" r="3" fill="none" stroke="#555"/>
<rect x="91" y="973" width="43" height="10" fill="#f7a51d"/>
<text x="92" y="982" textLength="41" lengthAdjust="spacingAndGlyphs" style="font-size:11.500px;fill:#111">mat_Boc</text>

<!-- coordinates -->
<rect x="971.500" y="901.500" width="295" height="115" fill="#464646" stroke="#5a5a5a"/>
<path d="M972 923.500H1266" stroke="#2f2f2f"/><path d="M972 924.500H1266" stroke="#585858"/>
<rect x="975" y="907" width="12" height="11" fill="url(#g)"/>
<text x="995" y="917" class="dim">--</text><text x="1087" y="917" class="dim">--</text><text x="1179" y="917" class="dim">--</text>
<g fill="#4a4a4a" stroke="#3a3a3a">
<rect x="984" y="929" width="83" height="15" rx="2"/><rect x="1081" y="929" width="83" height="15" rx="2"/><rect x="1180" y="929" width="82" height="15" rx="2"/>
<rect x="984" y="949" width="83" height="15" rx="2"/><rect x="1081" y="949" width="83" height="15" rx="2"/><rect x="1180" y="949" width="82" height="15" rx="2"/>
<rect x="984" y="969" width="83" height="15" rx="2"/><rect x="1081" y="969" width="83" height="15" rx="2"/><rect x="1180" y="969" width="82" height="15" rx="2"/>
</g>
<text x="974" y="941">X</text><text x="974" y="961">Y</text><text x="974" y="981">Z</text>
<text x="1071" y="941">X</text><text x="1071" y="961">Y</text><text x="1071" y="981">Z</text>
<text x="1169" y="941">H</text><text x="1169" y="961">P</text><text x="1169" y="981">B</text>
<text x="989" y="941" class="dim" textLength="23" lengthAdjust="spacingAndGlyphs">0 cm</text><text x="1086" y="941" class="dim" textLength="23" lengthAdjust="spacingAndGlyphs">0 cm</text><text x="1185" y="941" class="dim">0 °</text>
<text x="989" y="961" class="dim" textLength="23" lengthAdjust="spacingAndGlyphs">0 cm</text><text x="1086" y="961" class="dim" textLength="23" lengthAdjust="spacingAndGlyphs">0 cm</text><text x="1185" y="961" class="dim">0 °</text>
<text x="989" y="981" class="dim" textLength="23" lengthAdjust="spacingAndGlyphs">0 cm</text><text x="1086" y="981" class="dim" textLength="23" lengthAdjust="spacingAndGlyphs">0 cm</text><text x="1185" y="981" class="dim">0 °</text>
<path d="M1063 933l2 2.500h-4ZM1063 941l2-2.500h-4ZM1160 933l2 2.500h-4ZM1160 941l2-2.500h-4ZM1258 933l2 2.500h-4ZM1258 941l2-2.500h-4ZM1063 953l2 2.500h-4ZM1063 961l2-2.500h-4ZM1160 953l2 2.500h-4ZM1160 961l2-2.500h-4ZM1258 953l2 2.500h-4ZM1258 961l2-2.500h-4ZM1063 973l2 2.500h-4ZM1063 981l2-2.500h-4ZM1160 973l2 2.500h-4ZM1160 981l2-2.500h-4ZM1258 973l2 2.500h-4ZM1258 981l2-2.500h-4Z" fill="#777"/>
<rect x="984" y="991" width="83" height="16" rx="3" fill="#585858"/><text x="991" y="1003" textLength="32" lengthAdjust="spacingAndGlyphs" style="fill:#858585">World</text><path d="M1054 998h8l-4 4Z" fill="#777"/>
<rect x="1081" y="991" width="83" height="16" rx="3" fill="#585858"/><text x="1088" y="1003" textLength="27" lengthAdjust="spacingAndGlyphs" style="fill:#858585">Scale</text><path d="M1150 998h8l-4 4Z" fill="#777"/>
<rect x="1180" y="991" width="82" height="16" rx="8" fill="#686868" stroke="#2e2e2e"/><text x="1206" y="1004" textLength="30" lengthAdjust="spacingAndGlyphs" class="lt">Apply</text>

<!-- status / logo -->
<rect x="0.500" y="1020.500" width="1266" height="18" fill="#464646" stroke="#5a5a5a"/>
<rect x="4" y="1024" width="12" height="12" fill="url(#g)"/>
<text x="26.500" y="1035" textLength="691" lengthAdjust="spacingAndGlyphs">Move: Click and drag to move elements. Hold down SHIFT to quantize movement / add to the selection in point mode, CTRL to remove.</text>
<text transform="translate(33,1012) rotate(-90)" textLength="82" lengthAdjust="spacingAndGlyphs" style="font-size:17px;fill:#868686">CINEMA 4D</text>
<text transform="translate(16,1012) rotate(-90)" textLength="57" lengthAdjust="spacingAndGlyphs" style="font-size:17px;font-weight:bold;font-style:italic;fill:#9a9a9a">MAXON</text>

<!-- object manager -->
<rect x="1270.500" y="48.500" width="628" height="787" fill="#464646" stroke="#5a5a5a"/>
<rect x="1276" y="54" width="12" height="12" fill="url(#g)"/>
<text x="1297" y="64" textLength="18" lengthAdjust="spacingAndGlyphs">File</text>
<text x="1329" y="64" textLength="20" lengthAdjust="spacingAndGlyphs">Edit</text>
<text x="1363" y="64" textLength="25" lengthAdjust="spacingAndGlyphs">View</text>
<text x="1403" y="64" textLength="38" lengthAdjust="spacingAndGlyphs">Objects</text>
<text x="1455" y="64" textLength="24" lengthAdjust="spacingAndGlyphs">Tags</text>
<text x="1493" y="64" textLength="56" lengthAdjust="spacingAndGlyphs">Bookmarks</text>
<circle cx="1832" cy="57" r="4.500" fill="none" stroke="#1c1c1c" stroke-width="1.200"/><path d="M1835 61l4 6" stroke="#1c1c1c" stroke-width="1.600"/>
<path d="M1852 53l7 7h-3v6h-8v-6h-3Z" fill="none" stroke="#111" stroke-width="1.800"/>
<ellipse cx="1871" cy="60" rx="6" ry="3" fill="none" stroke="#6a6a6a"/>
<rect x="1883.500" y="52.500" width="11" height="14" fill="none" stroke="#1c1c1c"/><rect x="1883" y="52" width="12" height="3" fill="#1c1c1c"/><path d="M1889 57v7M1885.500 60.500h7" stroke="#1c1c1c"/>
<rect x="1272" y="73" width="625" height="762" fill="#464646"/>
<rect x="1272" y="73" width="625" height="20" fill="#505050"/><rect x="1272" y="93" width="625" height="20" fill="#4a4a4a"/><rect x="1272" y="113" width="625" height="20" fill="#505050"/>
<path d="M1272 71.500H1897M1272.500 72V835M1896.500 72V835M1272 834.500H1897" fill="none" stroke="#333"/>
<path d="M1563.500 73V835M1603.500 73V835" stroke="#343434"/><path d="M1564.500 73V835M1604.500 73V835" stroke="#5a5a5a"/>
<path d="M1280.500 88V121.500H1288M1291.500 100V93M1284 84h6" fill="none" stroke="#8c8c8c"/>
<rect x="1276.500" y="80.500" width="8" height="8" fill="#464646" stroke="#8c8c8c"/><path d="M1278 84.500h5" stroke="#bbb"/>
<rect x="1287.500" y="100.500" width="8" height="8" fill="#464646" stroke="#8c8c8c"/><path d="M1289 104.500h5M1291.500 102v5" stroke="#bbb"/>
<path d="M1296 77L1303 81V88L1296 92 1289 88V81Z" fill="#35c978" stroke="#222" stroke-width=".6"/><circle cx="1289" cy="81" r="1" fill="#ddd"/><circle cx="1303" cy="88" r="1" fill="#ddd"/><circle cx="1296" cy="92" r="1" fill="#ddd"/>
<text x="1307" y="88" textLength="100" lengthAdjust="spacingAndGlyphs">Subdivision Surface</text>
<path d="M1302 98V109H1313" fill="none" stroke="#eee" stroke-width="1.600"/><text x="1306" y="104" style="font-size:10px;font-weight:bold;fill:#e8e8e8">0</text>
<text x="1318.500" y="108" textLength="239.500" lengthAdjust="spacingAndGlyphs">Digital_Single_Lens_Reflex_Camera_with_Zoom</text>
<circle cx="1296" cy="123.500" r="7" fill="url(#sk)"/><path d="M1289 123.500h14M1296 117v13" stroke="#6f8fb8" stroke-width=".6"/>
<text x="1307" y="128" textLength="17" lengthAdjust="spacingAndGlyphs">Sky</text>
<rect x="1567" y="77" width="12" height="12" rx="1" fill="#7a7a7a"/><path d="M1568 88L1578 78" stroke="#4c4c4c" stroke-width="1.500"/>
<rect x="1567" y="97" width="12" height="12" rx="1" fill="#8a0a5a"/>
<rect x="1567" y="117" width="12" height="12" rx="1" fill="#7a7a7a"/><path d="M1568 128L1578 118" stroke="#4c4c4c" stroke-width="1.500"/>
<g fill="#6e6e6e"><circle cx="1586.500" cy="79" r="2.500"/><circle cx="1586.500" cy="87" r="2.500"/><circle cx="1586.500" cy="99" r="2.500"/><circle cx="1586.500" cy="107" r="2.500"/><circle cx="1586.500" cy="127" r="2.500"/></g>
<circle cx="1586.500" cy="119" r="2.500" fill="#e24a4a"/>
<path d="M1592 84l2.500 3.500 5-7" fill="none" stroke="#3fd080" stroke-width="1.200"/>

<!-- tabs -->
<rect x="1900" y="48" width="20" height="50" rx="3" fill="#666"/>
<rect x="1900" y="100" width="20" height="200" fill="#3c3c3c"/>
<path d="M1900 142.500H1920M1900 238.500H1920" stroke="#2f2f2f"/>
<text transform="translate(1905,57) rotate(90)" textLength="35" lengthAdjust="spacingAndGlyphs" class="or">Objects</text>
<text transform="translate(1905,108) rotate(90)" textLength="27" lengthAdjust="spacingAndGlyphs" class="dim">Takes</text>
<text transform="translate(1905,149) rotate(90)" textLength="81" lengthAdjust="spacingAndGlyphs" class="dim">Content Browser</text>
<text transform="translate(1905,245) rotate(90)" textLength="46" lengthAdjust="spacingAndGlyphs" class="dim">Structure</text>
<rect x="1900" y="840" width="20" height="62" rx="2" fill="#3c3c3c"/>
<rect x="1900" y="904" width="20" height="41" rx="3" fill="#666"/>
<text transform="translate(1905,848) rotate(90)" textLength="50" lengthAdjust="spacingAndGlyphs" class="dim">Attributes</text>
<text transform="translate(1905,911) rotate(90)" textLength="31" lengthAdjust="spacingAndGlyphs" class="or">Layers</text>

<!-- layer manager -->
<rect x="1270.500" y="840.500" width="628" height="198" fill="#464646" stroke="#5a5a5a"/>
<rect x="1276" y="846" width="12" height="11" fill="url(#g)"/>
<text x="1297" y="856" textLength="18" lengthAdjust="spacingAndGlyphs">File</text>
<text x="1329" y="856" textLength="20" lengthAdjust="spacingAndGlyphs">Edit</text>
<text x="1363" y="856" textLength="25" lengthAdjust="spacingAndGlyphs">View</text>
<rect x="1272.500" y="864.500" width="625" height="172" fill="#464646" stroke="#333"/>
<path d="M1273 880.500H1897" stroke="#333"/>
<path d="M1563.500 865v15M1581.500 865v15M1599.500 865v15M1617.500 865v15M1635.500 865v15M1653.500 865v15M1670.500 865v15M1689.500 865v15M1707.500 865v15M1724.500 865v15M1743.500 865v15" stroke="#5e5e5e"/>
<text x="1276" y="877" textLength="28" lengthAdjust="spacingAndGlyphs">Name</text>
<text x="1567" y="877">S</text><text x="1585" y="877">V</text><text x="1603" y="877">R</text><text x="1621" y="877">M</text><text x="1639" y="877">L</text><text x="1657" y="877">A</text><text x="1675" y="877">G</text><text x="1693" y="877">D</text><text x="1711" y="877">E</text><text x="1728" y="877">X</text>
<rect x="1273" y="881" width="624" height="15" fill="#505050"/>
<path d="M1284.500 886v4h8" fill="none" stroke="#8c8c8c"/>
<rect x="1296" y="884" width="10" height="9.500" fill="#8a0a5a"/>
<text x="1313" y="893" textLength="239" lengthAdjust="spacingAndGlyphs" class="or">Digital_Single_Lens_Reflex_Camera_with_Zoom</text>
<ellipse cx="1574" cy="888" rx="5" ry="5" fill="#8a8a8a"/>
<rect x="1585" y="883" width="12" height="10" fill="#ddd" stroke="#111"/><circle cx="1591" cy="888" r="2.500" fill="#111"/>
<rect x="1603" y="886" width="12" height="8" fill="#111"/><path d="M1603 883l12-1v3h-12Z" fill="#111"/><path d="M1605 883v3M1609 883v3M1613 883v3" stroke="#777"/>
<path d="M1622 882v7h4M1626 886h3" fill="none" stroke="#ddd"/><path d="M1629 892h4" stroke="#eee" stroke-width="1.500"/>
<rect x="1640" y="888" width="9" height="7" fill="none" stroke="#1c1c1c"/><path d="M1641.500 888v-3a3 3 0 016 0" fill="none" stroke="#1c1c1c"/>
<rect x="1661" y="882" width="6" height="12" fill="#ddd" stroke="#111"/><path d="M1661 886h6M1661 890h6" stroke="#111"/>
<path d="M1681 882l6 10h-12Z" fill="#ddd" stroke="#222"/><path d="M1681 886v6" stroke="#222"/>
<path d="M1694 884l6-2 5 2v5l-5 4-6-4Z" fill="#bbb" stroke="#222"/>
<path d="M1712 884h10c0 4-2 7-5 7s-5-3-5-7Z" fill="#e8e8e8" stroke="#222" stroke-width=".7"/>
<path d="M1731 882h3v3h3v-3h3v5l-1 1 1 1v5h-3v-3h-3v3h-3v-5l1-1-1-1Z" fill="#eee" stroke="#222" stroke-width=".5"/>
</svg>
</body></html>
